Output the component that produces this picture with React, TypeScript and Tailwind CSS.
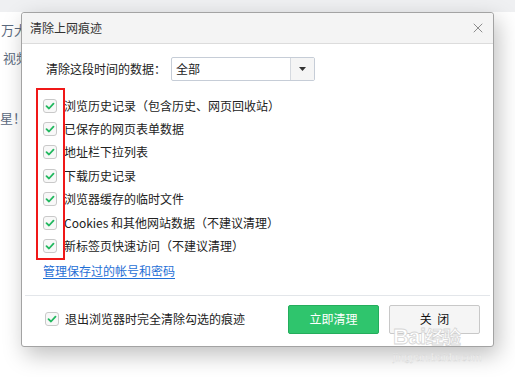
import { X } from "lucide-react";

const FONT = { fontFamily: '"Noto Sans CJK SC", "Noto Sans", sans-serif' };

const ITEMS = [
  "浏览历史记录（包含历史、网页回收站）",
  "已保存的网页表单数据",
  "地址栏下拉列表",
  "下载历史记录",
  "浏览器缓存的临时文件",
  "Cookies 和其他网站数据（不建议清理）",
  "新标签页快速访问（不建议清理）",
];

function CheckBox() {
  return (
    <span className="w-[14px] h-[14px] flex-shrink-0 rounded-[3px] border border-[#c9c9c9] bg-[#f8f8f8] flex items-center justify-center">
      <svg width="10" height="10" viewBox="0 0 10 10" aria-hidden>
        <path d="M1.5 5.2 L4 7.5 L8.5 2.6" fill="none" stroke="#22b85f" strokeWidth="1.8" strokeLinecap="round" strokeLinejoin="round" />
      </svg>
    </span>
  );
}

export default function App() {
  return (
    <div className="relative w-[515px] h-[377px] overflow-hidden bg-white text-[#222]" style={FONT}>
      {/* page behind the dialog, clipped at the dialog edge */}
      <div className="h-[12px] bg-[#eff0f2]" />
      <div className="w-[21px] overflow-hidden whitespace-nowrap text-[13px] text-[#5b6a7e] leading-[16px]">
        <div className="mt-[10px] pl-[1px]">万大</div>
        <div className="mt-[12px] pl-[3px]">视频</div>
        <div className="mt-[44px]">星！</div>
      </div>

      {/* dialog */}
      <div className="absolute left-[21px] top-[12px] w-[473px] h-[335px] bg-white border border-[#a3a3a3] rounded-[3px] shadow-[4px_8px_22px_rgba(0,0,0,0.25)] text-[12px] leading-[16px]">
        <div className="h-[31px] bg-[#f4f4f4] border-b border-[#dcdcdc] flex items-center justify-between pl-[8px] pr-[7px] rounded-t-[3px]">
          <span className="text-[12px] text-[#333]">清除上网痕迹</span>
          <X size={16} strokeWidth={1.1} className="text-[#666]" />
        </div>

        <div className="mt-[13px] flex items-center pl-[24px] h-[24px]">
          <span className="w-[125px]">清除这段时间的数据：</span>
          <div className="w-[144px] h-[24px] flex border border-[#c6cdd7] rounded-[2px]">
            <span className="flex-1 flex items-center pl-[4px]">全部</span>
            <span className="w-[24px] border-l border-[#d5d9df] bg-[#f5f5f5] flex items-center justify-center">
              <svg width="7" height="4" viewBox="0 0 7 4" aria-hidden>
                <path d="M0 0 H7 L3.5 4 Z" fill="#333" />
              </svg>
            </span>
          </div>
        </div>

        <div className="mt-[13px] pl-[21px]">
          {ITEMS.map(t => (
            <div key={t} className="h-[23.4px] flex items-center gap-[7px]">
              <CheckBox />
              <span>{t}</span>
            </div>
          ))}
        </div>

        <div className="mt-[5px] pl-[21px]">
          <a className="text-[#1f6fd6] underline underline-offset-2">管理保存过的帐号和密码</a>
        </div>

        <div className="mt-[16px] mx-[3px] border-t border-[#e3e6ea]" />

        <div className="mt-[9px] flex items-center justify-between pl-[23px] pr-[13px]">
          <div className="flex items-center gap-[6px]">
            <CheckBox />
            <span>退出浏览器时完全清除勾选的痕迹</span>
          </div>
          <div className="flex gap-[10px]">
            <button className="w-[91px] h-[29px] rounded-[2px] bg-[#2fc56d] border border-[#24ad5c] text-white text-[12px]">
              立即清理
            </button>
            <button className="w-[91px] h-[29px] rounded-[2px] bg-[#f5f5f5] border border-[#c8c8c8] text-[#111] text-[12px]">
              关&nbsp;&nbsp;闭
            </button>
          </div>
        </div>

        {/* red annotation frame */}
        <div className="absolute left-[14px] top-[75px] w-[29px] h-[172px] border-2 border-[#f01818]" />
      </div>

      {/* watermark */}
      <div className="absolute left-[393px] top-[326px] text-white leading-none pointer-events-none [-webkit-text-stroke:0.8px_#d6d6d6]" style={{ fontFamily: '"Liberation Sans", "Noto Sans CJK SC", sans-serif' }}>
        <div className="text-[22px] font-bold tracking-tight">Bai<span className="text-[18px]">经验</span></div>
        <div className="mt-[4px] text-[11px] [-webkit-text-stroke:0.4px_#d6d6d6]">jingyan.baidu.com</div>
      </div>
    </div>
  );
}
